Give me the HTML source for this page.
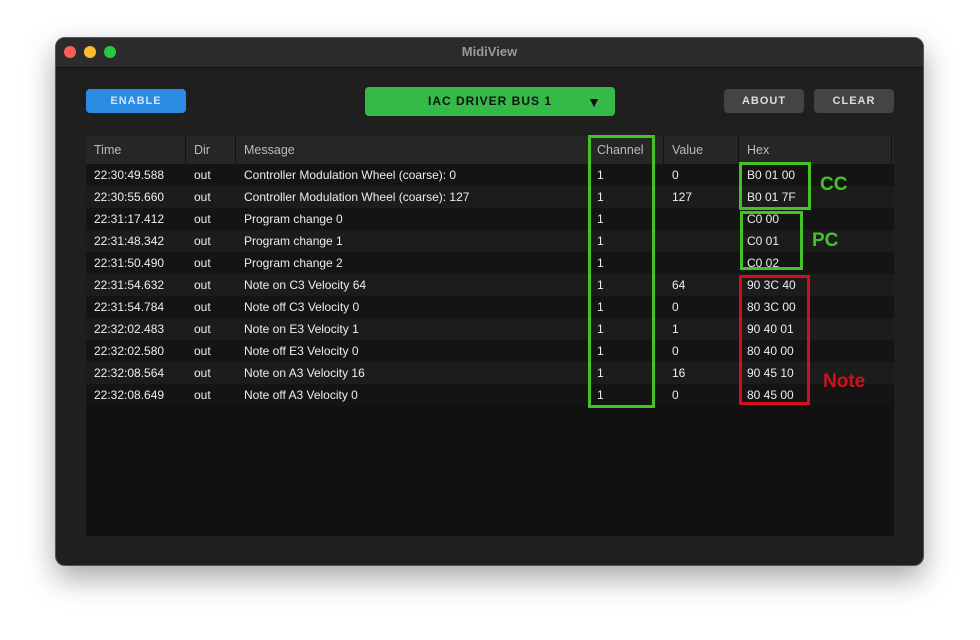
<!DOCTYPE html><html><head><style>
body{margin:0;width:980px;height:640px;background:#fff;font-family:"Liberation Sans",sans-serif;position:relative;overflow:hidden}
.win{position:absolute;left:55px;top:37px;width:869px;height:529px;background:#1f1f1f;border-radius:10px;box-shadow:0 12px 30px rgba(0,0,0,.35);border:1px solid #555;box-sizing:border-box;overflow:hidden}
.tb{height:29px;background:#2b2b2b;border-bottom:1px solid #111;text-align:center;color:#9a9a9a;font-size:13px;font-weight:bold;line-height:28px}
.dot{position:absolute;top:8px;width:12px;height:12px;border-radius:50%}
.btn{position:absolute;color:#ddd;font-size:11px;font-weight:bold;letter-spacing:1px;text-align:center;border-radius:4px}
.tbl{position:absolute;left:30px;top:98px;width:808px;height:400px;background:#111}
.row{position:absolute;left:0;width:808px;height:22px;font-size:12px;color:#eee;line-height:22px}
.row span,.hd span{position:absolute}
.hd{position:absolute;top:0;left:0;width:808px;height:28px;background:#262626;color:#bbb;font-size:12.5px;line-height:28px}
.sep{position:absolute;top:0;width:1px;height:28px;background:#111}
.box{position:absolute;border:3px solid #44c22a;box-sizing:border-box}
.lbl{position:absolute;font-weight:bold;font-size:19px}
</style></head><body>
<div class="win">
<div class="tb">MidiView</div>
<div class="dot" style="left:8px;background:#fe5f57"></div>
<div class="dot" style="left:28px;background:#febc2e"></div>
<div class="dot" style="left:48px;background:#28c840"></div>
<div class="btn" style="left:30px;top:51px;width:100px;height:24px;line-height:25px;background:#2b8be0;color:#cfe4f7">ENABLE</div>
<div class="btn" style="left:309px;top:49px;width:250px;height:29px;line-height:29px;background:#35ba48;color:#111;font-size:12px">IAC DRIVER BUS 1<span style="position:absolute;right:13px;top:1px;font-size:14px">&#9660;</span></div>
<div class="btn" style="left:668px;top:51px;width:80px;height:24px;line-height:25px;background:#444">ABOUT</div>
<div class="btn" style="left:758px;top:51px;width:80px;height:24px;line-height:25px;background:#444">CLEAR</div>
<div class="tbl">
<div class="hd"><span style="left:8px">Time</span><span style="left:108px">Dir</span><span style="left:158px">Message</span><span style="left:511px">Channel</span><span style="left:586px">Value</span><span style="left:661px">Hex</span>
<div class="sep" style="left:99px"></div><div class="sep" style="left:149px"></div><div class="sep" style="left:502px"></div><div class="sep" style="left:577px"></div><div class="sep" style="left:652px"></div><div class="sep" style="left:805px"></div></div>
</div>
</div>
<div id="rows"></div>
<script>
var d=[["22:30:49.588","Controller Modulation Wheel (coarse): 0","0","B0 01 00"],["22:30:55.660","Controller Modulation Wheel (coarse): 127","127","B0 01 7F"],["22:31:17.412","Program change 0","","C0 00"],["22:31:48.342","Program change 1","","C0 01"],["22:31:50.490","Program change 2","","C0 02"],["22:31:54.632","Note on C3 Velocity 64","64","90 3C 40"],["22:31:54.784","Note off C3 Velocity 0","0","80 3C 00"],["22:32:02.483","Note on E3 Velocity 1","1","90 40 01"],["22:32:02.580","Note off E3 Velocity 0","0","80 40 00"],["22:32:08.564","Note on A3 Velocity 16","16","90 45 10"],["22:32:08.649","Note off A3 Velocity 0","0","80 45 00"]];
var h="";d.forEach(function(r,i){h+='<div class="row" style="left:86px;top:'+(164+i*22)+'px;background:'+(i%2?'#1c1c1c':'#141414')+'"><span style="left:8px">'+r[0]+'</span><span style="left:108px">out</span><span style="left:158px">'+r[1]+'</span><span style="left:511px">1</span><span style="left:586px">'+r[2]+'</span><span style="left:661px">'+r[3]+'</span></div>'});
document.getElementById("rows").innerHTML=h;
</script>
<div class="box" style="left:588px;top:135px;width:67px;height:273px"></div>
<div class="box" style="left:739px;top:162px;width:72px;height:48px"></div>
<div class="box" style="left:740px;top:211px;width:63px;height:59px"></div>
<div class="box" style="left:739px;top:275px;width:71px;height:130px;border-color:#d0101a"></div>
<div class="lbl" style="left:820px;top:174px;color:#44c22a">CC</div>
<div class="lbl" style="left:812px;top:230px;color:#44c22a">PC</div>
<div class="lbl" style="left:823px;top:371px;color:#d0101a">Note</div>
</body></html>
